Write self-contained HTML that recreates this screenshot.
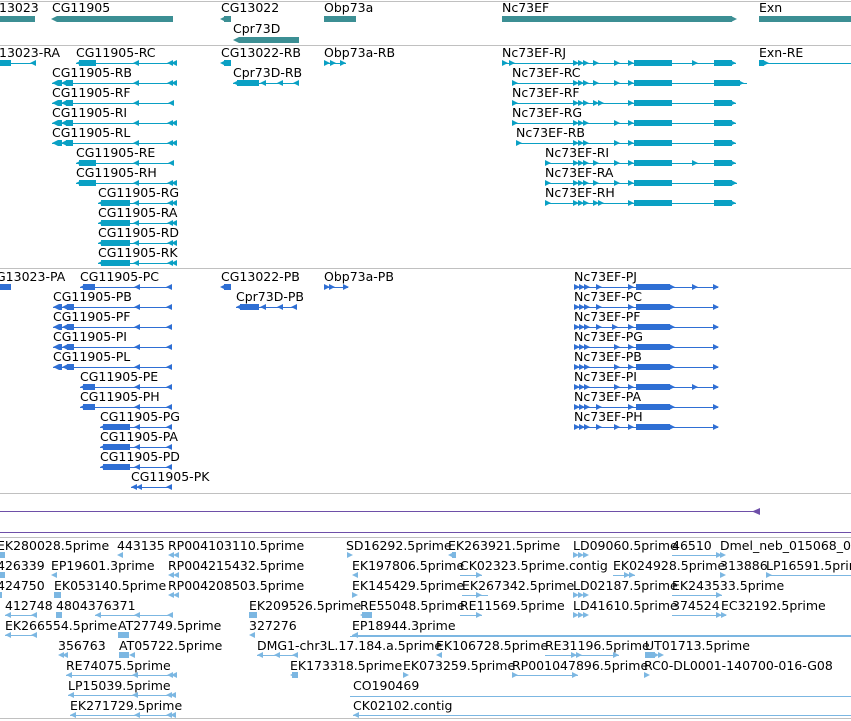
<!DOCTYPE html>
<html><head><meta charset="utf-8"><style>
body{margin:0;width:851px;height:721px;overflow:hidden;background:#fff;position:relative;font-family:"DejaVu Sans","Liberation Sans",sans-serif}
.t{position:absolute;font-size:12.5px;line-height:14px;color:#000;white-space:nowrap}
.h{position:absolute;left:0;width:851px;height:1px;background:#c0c0c0}
i{position:absolute;display:block;height:1px}
b{position:absolute;display:block;height:6px}
b.L{width:6px;clip-path:polygon(0 50%,100% 0,100% 100%)}
b.R{width:6px;clip-path:polygon(0 0,100% 50%,0 100%)}
.c0{background:#3c8f94}.c1{background:#0aa0c4}.c2{background:#2f6fd4}.c3{background:#7cb7e2}
</style></head><body>
<div class="h" style="top:1px"></div>
<div class="h" style="top:45px"></div>
<div class="h" style="top:268px"></div>
<div class="h" style="top:493px"></div>
<div class="h" style="top:537px"></div>
<div class="h" style="top:718px"></div>
<div style="position:absolute;left:0;top:511px;width:755px;height:1px;background:#6e4fa8"></div>
<div style="position:absolute;left:752px;top:508px;width:8px;height:7px;background:#6e4fa8;clip-path:polygon(0 50%,100% 0,100% 100%)"></div>
<div style="position:absolute;left:0;top:532px;width:851px;height:1px;background:#6e4fa8"></div>
<div style="position:absolute;left:350px;top:636px;width:501px;height:1px;background:#7cb7e2"></div>
<div style="position:absolute;left:350px;top:696px;width:501px;height:1px;background:#7cb7e2"></div>

<!-- genes -->
<div class="t" style="left:-1px;top:1px">13023</div><b class="c0" style="left:0;top:16px;width:35px"></b>
<div class="t" style="left:52px;top:1px">CG11905</div><b class="c0" style="left:57px;top:16px;width:116px"></b><b class="c0 L" style="left:51px;top:16px"></b>
<div class="t" style="left:221px;top:1px">CG13022</div><b class="c0" style="left:224px;top:16px;width:7px"></b><b class="c0 L" style="left:220px;top:16px"></b>
<div class="t" style="left:233px;top:22px">Cpr73D</div><b class="c0" style="left:239px;top:37px;width:60px"></b><b class="c0 L" style="left:233px;top:37px"></b>
<div class="t" style="left:324px;top:1px">Obp73a</div><b class="c0" style="left:324px;top:16px;width:32px"></b>
<div class="t" style="left:502px;top:1px">Nc73EF</div><b class="c0" style="left:502px;top:16px;width:230px"></b><b class="c0 R" style="left:731px;top:16px"></b>
<div class="t" style="left:759px;top:1px">Exn</div><b class="c0" style="left:759px;top:16px;width:92px"></b>

<!-- transcripts -->
<div class="t" style="left:-1px;top:46px">13023-RA</div><b class="c1" style="left:0;top:60px;width:11px"></b><i class="c1" style="left:0;top:63px;width:35px"></i><b class="c1 L" style="left:30px;top:60px"></b>
<div class="t" style="left:76px;top:46px">CG11905-RC</div><b class="c1" style="left:79px;top:60px;width:17px"></b><b class="c1 L" style="left:76px;top:60px"></b><i class="c1" style="left:76px;top:63px;width:100px"></i><b class="c1 L" style="left:133px;top:60px"></b><b class="c1 L" style="left:167px;top:60px"></b><b class="c1 L" style="left:171px;top:60px"></b>
<div class="t" style="left:52px;top:66px">CG11905-RB</div><b class="c1 L" style="left:52px;top:80px"></b><b class="c1" style="left:58px;top:80px;width:4px"></b><b class="c1 L" style="left:61px;top:80px"></b><b class="c1" style="left:66px;top:80px;width:7px"></b><i class="c1" style="left:52px;top:83px;width:124px"></i><b class="c1 L" style="left:133px;top:80px"></b><b class="c1 L" style="left:167px;top:80px"></b><b class="c1 L" style="left:171px;top:80px"></b>
<div class="t" style="left:52px;top:86px">CG11905-RF</div><b class="c1 L" style="left:52px;top:100px"></b><b class="c1" style="left:58px;top:100px;width:4px"></b><b class="c1 L" style="left:61px;top:100px"></b><b class="c1" style="left:66px;top:100px;width:7px"></b><i class="c1" style="left:52px;top:103px;width:122px"></i><b class="c1 L" style="left:133px;top:100px"></b><b class="c1 L" style="left:168px;top:100px"></b>
<div class="t" style="left:52px;top:106px">CG11905-RI</div><b class="c1 L" style="left:52px;top:120px"></b><b class="c1" style="left:58px;top:120px;width:4px"></b><b class="c1 L" style="left:61px;top:120px"></b><b class="c1" style="left:66px;top:120px;width:7px"></b><i class="c1" style="left:52px;top:123px;width:124px"></i><b class="c1 L" style="left:133px;top:120px"></b><b class="c1 L" style="left:167px;top:120px"></b><b class="c1 L" style="left:171px;top:120px"></b>
<div class="t" style="left:52px;top:126px">CG11905-RL</div><b class="c1 L" style="left:52px;top:140px"></b><b class="c1" style="left:58px;top:140px;width:4px"></b><b class="c1 L" style="left:61px;top:140px"></b><b class="c1" style="left:66px;top:140px;width:7px"></b><i class="c1" style="left:52px;top:143px;width:124px"></i><b class="c1 L" style="left:133px;top:140px"></b><b class="c1 L" style="left:167px;top:140px"></b><b class="c1 L" style="left:171px;top:140px"></b>
<div class="t" style="left:76px;top:146px">CG11905-RE</div><b class="c1" style="left:79px;top:160px;width:17px"></b><b class="c1 L" style="left:76px;top:160px"></b><i class="c1" style="left:76px;top:163px;width:98px"></i><b class="c1 L" style="left:133px;top:160px"></b><b class="c1 L" style="left:168px;top:160px"></b>
<div class="t" style="left:76px;top:166px">CG11905-RH</div><b class="c1" style="left:79px;top:180px;width:17px"></b><b class="c1 L" style="left:76px;top:180px"></b><i class="c1" style="left:76px;top:183px;width:100px"></i><b class="c1 L" style="left:133px;top:180px"></b><b class="c1 L" style="left:167px;top:180px"></b><b class="c1 L" style="left:171px;top:180px"></b>
<div class="t" style="left:98px;top:186px">CG11905-RG</div><b class="c1" style="left:101px;top:200px;width:29px"></b><b class="c1 L" style="left:98px;top:200px"></b><i class="c1" style="left:98px;top:203px;width:78px"></i><b class="c1 L" style="left:133px;top:200px"></b><b class="c1 L" style="left:167px;top:200px"></b><b class="c1 L" style="left:171px;top:200px"></b>
<div class="t" style="left:98px;top:206px">CG11905-RA</div><b class="c1" style="left:101px;top:220px;width:29px"></b><b class="c1 L" style="left:98px;top:220px"></b><i class="c1" style="left:98px;top:223px;width:78px"></i><b class="c1 L" style="left:133px;top:220px"></b><b class="c1 L" style="left:167px;top:220px"></b><b class="c1 L" style="left:171px;top:220px"></b>
<div class="t" style="left:98px;top:226px">CG11905-RD</div><b class="c1" style="left:101px;top:240px;width:29px"></b><b class="c1 L" style="left:98px;top:240px"></b><i class="c1" style="left:98px;top:243px;width:78px"></i><b class="c1 L" style="left:133px;top:240px"></b><b class="c1 L" style="left:167px;top:240px"></b><b class="c1 L" style="left:171px;top:240px"></b>
<div class="t" style="left:98px;top:246px">CG11905-RK</div><b class="c1" style="left:101px;top:260px;width:29px"></b><b class="c1 L" style="left:98px;top:260px"></b><i class="c1" style="left:98px;top:263px;width:78px"></i><b class="c1 L" style="left:133px;top:260px"></b><b class="c1 L" style="left:167px;top:260px"></b><b class="c1 L" style="left:171px;top:260px"></b>
<div class="t" style="left:221px;top:46px">CG13022-RB</div><b class="c1" style="left:224px;top:60px;width:7px"></b><b class="c1 L" style="left:220px;top:60px"></b>
<div class="t" style="left:233px;top:66px">Cpr73D-RB</div><b class="c1" style="left:237px;top:80px;width:22px"></b><b class="c1 L" style="left:233px;top:80px"></b><i class="c1" style="left:233px;top:83px;width:66px"></i><b class="c1 L" style="left:260px;top:80px"></b><b class="c1 L" style="left:277px;top:80px"></b><b class="c1 L" style="left:293px;top:80px"></b>
<div class="t" style="left:324px;top:46px">Obp73a-RB</div><b class="c1 R" style="left:324px;top:60px"></b><b class="c1 R" style="left:330px;top:60px"></b><i class="c1" style="left:324px;top:63px;width:22px"></i><b class="c1 R" style="left:340px;top:60px"></b>
<div class="t" style="left:759px;top:46px">Exn-RE</div><b class="c1" style="left:759px;top:60px;width:5px"></b><b class="c1 R" style="left:763px;top:60px"></b><i class="c1" style="left:759px;top:63px;width:92px"></i>

<!-- Nc73EF transcripts -->
<div class="t" style="left:502px;top:46px">Nc73EF-RJ</div><i class="c1" style="left:502px;top:63px;width:234px"></i><b class="c1 R" style="left:502px;top:60px"></b><b class="c1 R" style="left:509px;top:60px"></b><b class="c1 R" style="left:573px;top:60px"></b><b class="c1 R" style="left:578px;top:60px"></b><b class="c1 R" style="left:583px;top:60px"></b><b class="c1 R" style="left:593px;top:60px"></b><b class="c1 R" style="left:614px;top:60px"></b><b class="c1 R" style="left:628px;top:60px"></b><b class="c1" style="left:634px;top:60px;width:38px"></b><b class="c1 R" style="left:692px;top:60px"></b><b class="c1" style="left:714px;top:60px;width:18px"></b><b class="c1 R" style="left:730px;top:60px"></b>
<div class="t" style="left:512px;top:66px">Nc73EF-RC</div><i class="c1" style="left:512px;top:83px;width:235px"></i><b class="c1 R" style="left:512px;top:80px"></b><b class="c1 R" style="left:573px;top:80px"></b><b class="c1 R" style="left:578px;top:80px"></b><b class="c1 R" style="left:583px;top:80px"></b><b class="c1 R" style="left:593px;top:80px"></b><b class="c1 R" style="left:614px;top:80px"></b><b class="c1 R" style="left:628px;top:80px"></b><b class="c1" style="left:634px;top:80px;width:38px"></b><b class="c1" style="left:714px;top:80px;width:26px"></b><b class="c1 R" style="left:738px;top:80px"></b>
<div class="t" style="left:512px;top:86px">Nc73EF-RF</div><i class="c1" style="left:512px;top:103px;width:224px"></i><b class="c1 R" style="left:512px;top:100px"></b><b class="c1 R" style="left:573px;top:100px"></b><b class="c1 R" style="left:578px;top:100px"></b><b class="c1 R" style="left:583px;top:100px"></b><b class="c1 R" style="left:593px;top:100px"></b><b class="c1 R" style="left:598px;top:100px"></b><b class="c1 R" style="left:628px;top:100px"></b><b class="c1" style="left:634px;top:100px;width:38px"></b><b class="c1" style="left:714px;top:100px;width:18px"></b><b class="c1 R" style="left:730px;top:100px"></b>
<div class="t" style="left:512px;top:106px">Nc73EF-RG</div><i class="c1" style="left:512px;top:123px;width:224px"></i><b class="c1 R" style="left:512px;top:120px"></b><b class="c1 R" style="left:573px;top:120px"></b><b class="c1 R" style="left:578px;top:120px"></b><b class="c1 R" style="left:583px;top:120px"></b><b class="c1 R" style="left:614px;top:120px"></b><b class="c1 R" style="left:628px;top:120px"></b><b class="c1" style="left:634px;top:120px;width:38px"></b><b class="c1" style="left:714px;top:120px;width:18px"></b><b class="c1 R" style="left:730px;top:120px"></b>
<div class="t" style="left:516px;top:126px">Nc73EF-RB</div><i class="c1" style="left:516px;top:143px;width:220px"></i><b class="c1 R" style="left:516px;top:140px"></b><b class="c1 R" style="left:573px;top:140px"></b><b class="c1 R" style="left:578px;top:140px"></b><b class="c1 R" style="left:583px;top:140px"></b><b class="c1 R" style="left:614px;top:140px"></b><b class="c1 R" style="left:628px;top:140px"></b><b class="c1" style="left:634px;top:140px;width:38px"></b><b class="c1" style="left:714px;top:140px;width:18px"></b><b class="c1 R" style="left:730px;top:140px"></b>
<div class="t" style="left:545px;top:146px">Nc73EF-RI</div><i class="c1" style="left:545px;top:163px;width:191px"></i><b class="c1 R" style="left:545px;top:160px"></b><b class="c1 R" style="left:573px;top:160px"></b><b class="c1 R" style="left:578px;top:160px"></b><b class="c1 R" style="left:583px;top:160px"></b><b class="c1 R" style="left:593px;top:160px"></b><b class="c1 R" style="left:614px;top:160px"></b><b class="c1 R" style="left:628px;top:160px"></b><b class="c1" style="left:634px;top:160px;width:38px"></b><b class="c1 R" style="left:692px;top:160px"></b><b class="c1" style="left:714px;top:160px;width:18px"></b><b class="c1 R" style="left:730px;top:160px"></b>
<div class="t" style="left:545px;top:166px">Nc73EF-RA</div><i class="c1" style="left:545px;top:183px;width:192px"></i><b class="c1 R" style="left:545px;top:180px"></b><b class="c1 R" style="left:573px;top:180px"></b><b class="c1 R" style="left:578px;top:180px"></b><b class="c1 R" style="left:583px;top:180px"></b><b class="c1 R" style="left:593px;top:180px"></b><b class="c1 R" style="left:614px;top:180px"></b><b class="c1 R" style="left:628px;top:180px"></b><b class="c1" style="left:634px;top:180px;width:38px"></b><b class="c1" style="left:714px;top:180px;width:18px"></b><b class="c1 R" style="left:731px;top:180px"></b>
<div class="t" style="left:545px;top:186px">Nc73EF-RH</div><i class="c1" style="left:545px;top:203px;width:191px"></i><b class="c1 R" style="left:545px;top:200px"></b><b class="c1 R" style="left:573px;top:200px"></b><b class="c1 R" style="left:578px;top:200px"></b><b class="c1 R" style="left:583px;top:200px"></b><b class="c1 R" style="left:593px;top:200px"></b><b class="c1 R" style="left:598px;top:200px"></b><b class="c1 R" style="left:628px;top:200px"></b><b class="c1" style="left:634px;top:200px;width:38px"></b><b class="c1" style="left:714px;top:200px;width:18px"></b><b class="c1 R" style="left:730px;top:200px"></b>

<!-- proteins -->
<div class="t" style="left:-4px;top:270px">G13023-PA</div><b class="c2" style="left:0;top:284px;width:11px"></b>
<div class="t" style="left:80px;top:270px">CG11905-PC</div><b class="c2" style="left:83px;top:284px;width:12px"></b><b class="c2 L" style="left:80px;top:284px"></b><i class="c2" style="left:80px;top:287px;width:92px"></i><b class="c2 L" style="left:134px;top:284px"></b><b class="c2 L" style="left:166px;top:284px"></b>
<div class="t" style="left:53px;top:290px">CG11905-PB</div><b class="c2 L" style="left:53px;top:304px"></b><b class="c2" style="left:59px;top:304px;width:3px"></b><b class="c2 L" style="left:62px;top:304px"></b><b class="c2" style="left:67px;top:304px;width:7px"></b><i class="c2" style="left:53px;top:307px;width:119px"></i><b class="c2 L" style="left:134px;top:304px"></b><b class="c2 L" style="left:166px;top:304px"></b>
<div class="t" style="left:53px;top:310px">CG11905-PF</div><b class="c2 L" style="left:53px;top:324px"></b><b class="c2" style="left:59px;top:324px;width:3px"></b><b class="c2 L" style="left:62px;top:324px"></b><b class="c2" style="left:67px;top:324px;width:7px"></b><i class="c2" style="left:53px;top:327px;width:119px"></i><b class="c2 L" style="left:134px;top:324px"></b><b class="c2 L" style="left:166px;top:324px"></b>
<div class="t" style="left:53px;top:330px">CG11905-PI</div><b class="c2 L" style="left:53px;top:344px"></b><b class="c2" style="left:59px;top:344px;width:3px"></b><b class="c2 L" style="left:62px;top:344px"></b><b class="c2" style="left:67px;top:344px;width:7px"></b><i class="c2" style="left:53px;top:347px;width:119px"></i><b class="c2 L" style="left:134px;top:344px"></b><b class="c2 L" style="left:166px;top:344px"></b>
<div class="t" style="left:53px;top:350px">CG11905-PL</div><b class="c2 L" style="left:53px;top:364px"></b><b class="c2" style="left:59px;top:364px;width:3px"></b><b class="c2 L" style="left:62px;top:364px"></b><b class="c2" style="left:67px;top:364px;width:7px"></b><i class="c2" style="left:53px;top:367px;width:119px"></i><b class="c2 L" style="left:134px;top:364px"></b><b class="c2 L" style="left:166px;top:364px"></b>
<div class="t" style="left:80px;top:370px">CG11905-PE</div><b class="c2" style="left:83px;top:384px;width:12px"></b><b class="c2 L" style="left:80px;top:384px"></b><i class="c2" style="left:80px;top:387px;width:92px"></i><b class="c2 L" style="left:134px;top:384px"></b><b class="c2 L" style="left:166px;top:384px"></b>
<div class="t" style="left:80px;top:390px">CG11905-PH</div><b class="c2" style="left:83px;top:404px;width:12px"></b><b class="c2 L" style="left:80px;top:404px"></b><i class="c2" style="left:80px;top:407px;width:92px"></i><b class="c2 L" style="left:134px;top:404px"></b><b class="c2 L" style="left:166px;top:404px"></b>
<div class="t" style="left:100px;top:410px">CG11905-PG</div><b class="c2" style="left:103px;top:424px;width:27px"></b><b class="c2 L" style="left:100px;top:424px"></b><i class="c2" style="left:100px;top:427px;width:72px"></i><b class="c2 L" style="left:134px;top:424px"></b><b class="c2 L" style="left:166px;top:424px"></b>
<div class="t" style="left:100px;top:430px">CG11905-PA</div><b class="c2" style="left:103px;top:444px;width:27px"></b><b class="c2 L" style="left:100px;top:444px"></b><i class="c2" style="left:100px;top:447px;width:72px"></i><b class="c2 L" style="left:134px;top:444px"></b><b class="c2 L" style="left:166px;top:444px"></b>
<div class="t" style="left:100px;top:450px">CG11905-PD</div><b class="c2" style="left:103px;top:464px;width:27px"></b><b class="c2 L" style="left:100px;top:464px"></b><i class="c2" style="left:100px;top:467px;width:72px"></i><b class="c2 L" style="left:134px;top:464px"></b><b class="c2 L" style="left:166px;top:464px"></b>
<div class="t" style="left:131px;top:470px">CG11905-PK</div><b class="c2 L" style="left:131px;top:484px"></b><b class="c2 L" style="left:136px;top:484px"></b><i class="c2" style="left:131px;top:487px;width:41px"></i><b class="c2 L" style="left:166px;top:484px"></b>
<div class="t" style="left:221px;top:270px">CG13022-PB</div><b class="c2" style="left:224px;top:284px;width:7px"></b><b class="c2 L" style="left:220px;top:284px"></b>
<div class="t" style="left:236px;top:290px">Cpr73D-PB</div><b class="c2" style="left:240px;top:304px;width:19px"></b><b class="c2 L" style="left:236px;top:304px"></b><i class="c2" style="left:236px;top:307px;width:61px"></i><b class="c2 L" style="left:260px;top:304px"></b><b class="c2 L" style="left:277px;top:304px"></b><b class="c2 L" style="left:291px;top:304px"></b>
<div class="t" style="left:324px;top:270px">Obp73a-PB</div><b class="c2 R" style="left:324px;top:284px"></b><b class="c2 R" style="left:329px;top:284px"></b><i class="c2" style="left:324px;top:287px;width:24px"></i><b class="c2 R" style="left:343px;top:284px"></b>

<!-- Nc73EF proteins -->
<div class="t" style="left:574px;top:270px">Nc73EF-PJ</div><i class="c2" style="left:574px;top:287px;width:144px"></i><b class="c2 R" style="left:574px;top:284px"></b><b class="c2 R" style="left:579px;top:284px"></b><b class="c2 R" style="left:584px;top:284px"></b><b class="c2 R" style="left:596px;top:284px"></b><b class="c2 R" style="left:628px;top:284px"></b><b class="c2" style="left:636px;top:284px;width:34px"></b><b class="c2 R" style="left:669px;top:284px"></b><b class="c2 R" style="left:692px;top:284px"></b><b class="c2 R" style="left:713px;top:284px"></b>
<div class="t" style="left:574px;top:290px">Nc73EF-PC</div><i class="c2" style="left:574px;top:307px;width:144px"></i><b class="c2 R" style="left:574px;top:304px"></b><b class="c2 R" style="left:579px;top:304px"></b><b class="c2 R" style="left:584px;top:304px"></b><b class="c2 R" style="left:596px;top:304px"></b><b class="c2 R" style="left:628px;top:304px"></b><b class="c2" style="left:636px;top:304px;width:34px"></b><b class="c2 R" style="left:669px;top:304px"></b><b class="c2 R" style="left:713px;top:304px"></b>
<div class="t" style="left:574px;top:310px">Nc73EF-PF</div><i class="c2" style="left:574px;top:327px;width:144px"></i><b class="c2 R" style="left:574px;top:324px"></b><b class="c2 R" style="left:579px;top:324px"></b><b class="c2 R" style="left:584px;top:324px"></b><b class="c2 R" style="left:596px;top:324px"></b><b class="c2 R" style="left:612px;top:324px"></b><b class="c2 R" style="left:628px;top:324px"></b><b class="c2" style="left:636px;top:324px;width:34px"></b><b class="c2 R" style="left:669px;top:324px"></b><b class="c2 R" style="left:713px;top:324px"></b>
<div class="t" style="left:574px;top:330px">Nc73EF-PG</div><i class="c2" style="left:574px;top:347px;width:144px"></i><b class="c2 R" style="left:574px;top:344px"></b><b class="c2 R" style="left:579px;top:344px"></b><b class="c2 R" style="left:584px;top:344px"></b><b class="c2 R" style="left:614px;top:344px"></b><b class="c2 R" style="left:628px;top:344px"></b><b class="c2" style="left:636px;top:344px;width:34px"></b><b class="c2 R" style="left:669px;top:344px"></b><b class="c2 R" style="left:713px;top:344px"></b>
<div class="t" style="left:574px;top:350px">Nc73EF-PB</div><i class="c2" style="left:574px;top:367px;width:144px"></i><b class="c2 R" style="left:574px;top:364px"></b><b class="c2 R" style="left:579px;top:364px"></b><b class="c2 R" style="left:584px;top:364px"></b><b class="c2 R" style="left:614px;top:364px"></b><b class="c2 R" style="left:628px;top:364px"></b><b class="c2" style="left:636px;top:364px;width:34px"></b><b class="c2 R" style="left:669px;top:364px"></b><b class="c2 R" style="left:713px;top:364px"></b>
<div class="t" style="left:574px;top:370px">Nc73EF-PI</div><i class="c2" style="left:574px;top:387px;width:144px"></i><b class="c2 R" style="left:574px;top:384px"></b><b class="c2 R" style="left:579px;top:384px"></b><b class="c2 R" style="left:584px;top:384px"></b><b class="c2 R" style="left:614px;top:384px"></b><b class="c2 R" style="left:628px;top:384px"></b><b class="c2" style="left:636px;top:384px;width:34px"></b><b class="c2 R" style="left:669px;top:384px"></b><b class="c2 R" style="left:692px;top:384px"></b><b class="c2 R" style="left:713px;top:384px"></b>
<div class="t" style="left:574px;top:390px">Nc73EF-PA</div><i class="c2" style="left:574px;top:407px;width:144px"></i><b class="c2 R" style="left:574px;top:404px"></b><b class="c2 R" style="left:579px;top:404px"></b><b class="c2 R" style="left:584px;top:404px"></b><b class="c2 R" style="left:596px;top:404px"></b><b class="c2 R" style="left:628px;top:404px"></b><b class="c2" style="left:636px;top:404px;width:34px"></b><b class="c2 R" style="left:669px;top:404px"></b><b class="c2 R" style="left:713px;top:404px"></b>
<div class="t" style="left:574px;top:410px">Nc73EF-PH</div><i class="c2" style="left:574px;top:427px;width:144px"></i><b class="c2 R" style="left:574px;top:424px"></b><b class="c2 R" style="left:579px;top:424px"></b><b class="c2 R" style="left:584px;top:424px"></b><b class="c2 R" style="left:596px;top:424px"></b><b class="c2 R" style="left:614px;top:424px"></b><b class="c2 R" style="left:628px;top:424px"></b><b class="c2" style="left:636px;top:424px;width:34px"></b><b class="c2 R" style="left:669px;top:424px"></b><b class="c2 R" style="left:713px;top:424px"></b>

<!-- ESTs -->
<div class="t" style="left:-3px;top:539px">EK280028.5prime</div><b class="c3" style="left:0;top:552px;width:5px"></b>
<div class="t" style="left:117px;top:539px">443135</div><b class="c3 L" style="left:117px;top:552px"></b>
<div class="t" style="left:168px;top:539px">RP004103110.5prime</div><b class="c3 L" style="left:168px;top:552px"></b><b class="c3 L" style="left:173px;top:552px"></b>
<div class="t" style="left:346px;top:539px">SD16292.5prime</div><b class="c3 R" style="left:347px;top:552px"></b>
<div class="t" style="left:448px;top:539px">EK263921.5prime</div><b class="c3 L" style="left:448px;top:552px"></b><b class="c3" style="left:452px;top:552px;width:4px"></b>
<div class="t" style="left:573px;top:539px">LD09060.5prime</div><b class="c3 R" style="left:573px;top:552px"></b><b class="c3 R" style="left:578px;top:552px"></b><b class="c3 R" style="left:583px;top:552px"></b>
<div class="t" style="left:672px;top:539px">46510</div><i class="c3" style="left:672px;top:555px;width:50px"></i><b class="c3 R" style="left:716px;top:552px"></b><b class="c3 R" style="left:720px;top:552px"></b>
<div class="t" style="left:720px;top:539px">Dmel_neb_015068_07</div>

<div class="t" style="left:-3px;top:559px">426339</div><b class="c3" style="left:0;top:572px;width:5px"></b>
<div class="t" style="left:51px;top:559px">EP19601.3prime</div><b class="c3 L" style="left:51px;top:572px"></b>
<div class="t" style="left:168px;top:559px">RP004215432.5prime</div><b class="c3 L" style="left:168px;top:572px"></b><b class="c3 L" style="left:173px;top:572px"></b>
<div class="t" style="left:352px;top:559px">EK197806.5prime</div><b class="c3 L" style="left:352px;top:572px"></b>
<div class="t" style="left:460px;top:559px">CK02323.5prime.contig</div><i class="c3" style="left:460px;top:575px;width:22px"></i><b class="c3 R" style="left:476px;top:572px"></b>
<div class="t" style="left:613px;top:559px">EK024928.5prime</div><i class="c3" style="left:613px;top:575px;width:22px"></i><b class="c3 R" style="left:624px;top:572px"></b><b class="c3 R" style="left:629px;top:572px"></b>
<div class="t" style="left:720px;top:559px">313886</div><b class="c3 R" style="left:720px;top:572px"></b>
<div class="t" style="left:766px;top:559px">LP16591.5prime</div><i class="c3" style="left:766px;top:575px;width:85px"></i><b class="c3 R" style="left:766px;top:572px"></b>

<div class="t" style="left:-3px;top:579px">424750</div><b class="c3" style="left:0;top:592px;width:2px"></b>
<div class="t" style="left:54px;top:579px">EK053140.5prime</div><b class="c3" style="left:54px;top:592px;width:7px"></b>
<div class="t" style="left:168px;top:579px">RP004208503.5prime</div><b class="c3 L" style="left:168px;top:592px"></b><b class="c3 L" style="left:173px;top:592px"></b>
<div class="t" style="left:352px;top:579px">EK145429.5prime</div><b class="c3 R" style="left:352px;top:592px"></b>
<div class="t" style="left:462px;top:579px">EK267342.5prime</div><i class="c3" style="left:462px;top:595px;width:26px"></i><b class="c3 R" style="left:476px;top:592px"></b>
<div class="t" style="left:573px;top:579px">LD02187.5prime</div><b class="c3 R" style="left:573px;top:592px"></b><b class="c3 R" style="left:578px;top:592px"></b><b class="c3 R" style="left:583px;top:592px"></b>
<div class="t" style="left:672px;top:579px">EK243533.5prime</div><i class="c3" style="left:672px;top:595px;width:50px"></i><b class="c3 R" style="left:716px;top:592px"></b>

<div class="t" style="left:5px;top:599px">412748</div><i class="c3" style="left:5px;top:615px;width:31px"></i><b class="c3 L" style="left:5px;top:612px"></b><b class="c3 L" style="left:31px;top:612px"></b>
<div class="t" style="left:56px;top:599px">4804376371</div><b class="c3" style="left:56px;top:612px;width:6px"></b><i class="c3" style="left:95px;top:615px;width:77px"></i><b class="c3 L" style="left:95px;top:612px"></b><b class="c3 L" style="left:134px;top:612px"></b><b class="c3 L" style="left:167px;top:612px"></b>
<div class="t" style="left:249px;top:599px">EK209526.5prime</div><b class="c3" style="left:249px;top:612px;width:8px"></b>
<div class="t" style="left:360px;top:599px">RE55048.5prime</div><b class="c3" style="left:362px;top:612px;width:10px"></b><b class="c3 L" style="left:360px;top:612px"></b>
<div class="t" style="left:460px;top:599px">RE11569.5prime</div><i class="c3" style="left:460px;top:615px;width:22px"></i><b class="c3 R" style="left:476px;top:612px"></b>
<div class="t" style="left:573px;top:599px">LD41610.5prime</div><b class="c3 R" style="left:573px;top:612px"></b><b class="c3 R" style="left:578px;top:612px"></b><b class="c3 R" style="left:583px;top:612px"></b>
<div class="t" style="left:672px;top:599px">374524</div><i class="c3" style="left:672px;top:615px;width:54px"></i><b class="c3 R" style="left:716px;top:612px"></b><b class="c3 R" style="left:721px;top:612px"></b>
<div class="t" style="left:721px;top:599px">EC32192.5prime</div>

<div class="t" style="left:5px;top:619px">EK266554.5prime</div><i class="c3" style="left:5px;top:635px;width:31px"></i><b class="c3 L" style="left:5px;top:632px"></b><b class="c3 L" style="left:31px;top:632px"></b>
<div class="t" style="left:118px;top:619px">AT27749.5prime</div><b class="c3" style="left:118px;top:632px;width:11px"></b>
<div class="t" style="left:249px;top:619px">327276</div><b class="c3 L" style="left:249px;top:632px"></b>
<div class="t" style="left:352px;top:619px">EP18944.3prime</div><i class="c3" style="left:352px;top:635px;width:499px"></i><b class="c3 L" style="left:352px;top:632px"></b>

<div class="t" style="left:58px;top:639px">356763</div><b class="c3 L" style="left:58px;top:652px"></b><b class="c3 L" style="left:62px;top:652px"></b>
<div class="t" style="left:119px;top:639px">AT05722.5prime</div><b class="c3" style="left:119px;top:652px;width:10px"></b><b class="c3 L" style="left:129px;top:652px"></b>
<div class="t" style="left:257px;top:639px">DMG1-chr3L.17.184.a.5prime</div><i class="c3" style="left:257px;top:655px;width:40px"></i><b class="c3 L" style="left:257px;top:652px"></b><b class="c3 L" style="left:274px;top:652px"></b><b class="c3 L" style="left:292px;top:652px"></b>
<div class="t" style="left:436px;top:639px">EK106728.5prime</div><b class="c3 L" style="left:436px;top:652px"></b>
<div class="t" style="left:545px;top:639px">RE31196.5prime</div><i class="c3" style="left:545px;top:655px;width:74px"></i><b class="c3 R" style="left:571px;top:652px"></b><b class="c3 R" style="left:576px;top:652px"></b><b class="c3 R" style="left:613px;top:652px"></b>
<div class="t" style="left:645px;top:639px">UT01713.5prime</div><b class="c3" style="left:645px;top:652px;width:10px"></b><b class="c3 R" style="left:653px;top:652px"></b><b class="c3 R" style="left:658px;top:652px"></b>

<div class="t" style="left:66px;top:659px">RE74075.5prime</div><i class="c3" style="left:66px;top:675px;width:110px"></i><b class="c3 L" style="left:66px;top:672px"></b><b class="c3 L" style="left:132px;top:672px"></b><b class="c3 L" style="left:167px;top:672px"></b><b class="c3 L" style="left:171px;top:672px"></b>
<div class="t" style="left:290px;top:659px">EK173318.5prime</div><b class="c3" style="left:292px;top:672px;width:6px"></b><b class="c3 L" style="left:290px;top:672px"></b>
<div class="t" style="left:403px;top:659px">EK073259.5prime</div><b class="c3 R" style="left:403px;top:672px"></b>
<div class="t" style="left:512px;top:659px">RP001047896.5prime</div><i class="c3" style="left:512px;top:675px;width:66px"></i><b class="c3 R" style="left:512px;top:672px"></b><b class="c3 R" style="left:572px;top:672px"></b>
<div class="t" style="left:644px;top:659px">RC0-DL0001-140700-016-G08</div><b class="c3 R" style="left:644px;top:672px"></b>

<div class="t" style="left:68px;top:679px">LP15039.5prime</div><i class="c3" style="left:68px;top:695px;width:106px"></i><b class="c3 L" style="left:68px;top:692px"></b><b class="c3 L" style="left:132px;top:692px"></b><b class="c3 L" style="left:166px;top:692px"></b><b class="c3 L" style="left:170px;top:692px"></b>
<div class="t" style="left:353px;top:679px">CO190469</div>
<div class="t" style="left:70px;top:699px">EK271729.5prime</div><i class="c3" style="left:70px;top:715px;width:104px"></i><b class="c3 L" style="left:70px;top:712px"></b><b class="c3 L" style="left:134px;top:712px"></b><b class="c3 L" style="left:166px;top:712px"></b><b class="c3 L" style="left:170px;top:712px"></b>
<div class="t" style="left:353px;top:699px">CK02102.contig</div><i class="c3" style="left:353px;top:715px;width:498px"></i><b class="c3 L" style="left:353px;top:712px"></b>
</body></html>
